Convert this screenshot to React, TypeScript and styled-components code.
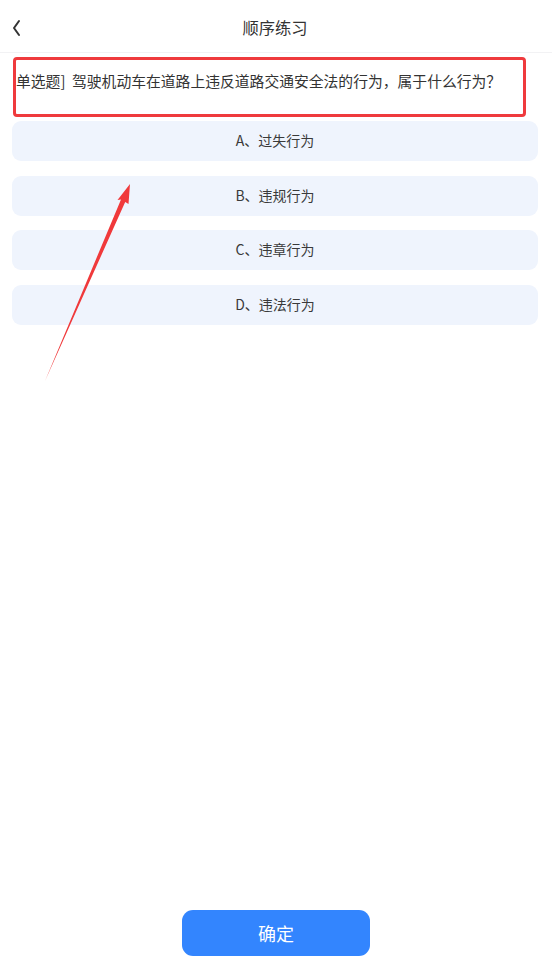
import React from "react";
import styled, { createGlobalStyle } from "styled-components";

const Global = createGlobalStyle`
  html, body { margin: 0; padding: 0; background: #ffffff; }
  body { font-family: "Noto Sans CJK SC", "Noto Sans", sans-serif; color: #333; }
  * { box-sizing: border-box; }
`;

const Page = styled.div`
  position: relative;
  width: 552px;
  min-height: 965px;
  display: flex;
  flex-direction: column;
  background: #fff;
`;

const Header = styled.header`
  height: 53px;
  border-bottom: 1px solid #f2f2f4;
  display: flex;
  align-items: center;
  justify-content: center;
  position: relative;
`;

const BackBtn = styled.span`
  position: absolute;
  left: 12px;
  top: 19px;
  width: 10px;
  height: 18px;
  display: flex;
`;

const Title = styled.h1`
  margin: 0;
  font-size: 16.3px;
  font-weight: 400;
  color: #333;
  line-height: 1;
  transform: translate(-1px, 1px);
`;

const QuestionWrap = styled.div`
  position: relative;
  margin: 4px 0 0 13px;
  width: 513px;
  height: 60px;
  display: flex;
  align-items: flex-start;
`;

const Question = styled.p`
  margin: 0;
  padding: 13px 0 0 3px;
  font-size: 14.8px;
  line-height: 22px;
  color: #333;
  white-space: nowrap;
`;

const RedFrame = styled.div`
  position: absolute;
  inset: 0;
  border: 3px solid #ef3a3d;
  border-radius: 4px;
  pointer-events: none;
`;

const Options = styled.div`
  display: flex;
  flex-direction: column;
  gap: 14.7px;
  padding: 4px 14px 0 12px;
`;

const Option = styled.div`
  height: 40px;
  border-radius: 9px;
  background: #eff4fd;
  display: flex;
  align-items: center;
  justify-content: center;
  font-size: 14px;
  color: #3a3a3a;
  padding-bottom: 2px;
`;

const Spacer = styled.div`
  flex: 1;
`;

const Footer = styled.div`
  display: flex;
  justify-content: center;
  padding: 0 0 9px 0;
`;

const Confirm = styled.button`
  width: 188px;
  height: 46px;
  border: none;
  border-radius: 11px;
  background: #3385fe;
  color: #fff;
  font-family: "Noto Sans CJK SC", sans-serif;
  font-size: 18px;
  display: flex;
  align-items: center;
  justify-content: center;
`;

const ArrowLayer = styled.svg`
  position: absolute;
  left: 0;
  top: 0;
  pointer-events: none;
`;

const options = ["A、过失行为", "B、违规行为", "C、违章行为", "D、违法行为"];

export default function App() {
  return (
    <>
      <Global />
      <Page>
        <Header>
          <BackBtn>
            <svg width="10" height="18" viewBox="0 0 10 18">
              <polyline points="7,2 2,9 7,16" fill="none" stroke="#333" strokeWidth="2" strokeLinecap="round" strokeLinejoin="round" />
            </svg>
          </BackBtn>
          <Title>顺序练习</Title>
        </Header>
        <QuestionWrap>
          <Question>单选题]&nbsp;&nbsp;驾驶机动车在道路上违反道路交通安全法的行为，属于什么行为？</Question>
          <RedFrame />
        </QuestionWrap>
        <Options>
          {options.map((o) => (
            <Option key={o}>{o}</Option>
          ))}
        </Options>
        <Spacer />
        <Footer>
          <Confirm>确定</Confirm>
        </Footer>
        <ArrowLayer width="552" height="400" viewBox="0 0 552 400">
          <polygon
            points="45,381 121,199.5 117.5,200 130,184 128.5,204 125.2,202"
            fill="#f0393b"
          />
        </ArrowLayer>
      </Page>
    </>
  );
}
